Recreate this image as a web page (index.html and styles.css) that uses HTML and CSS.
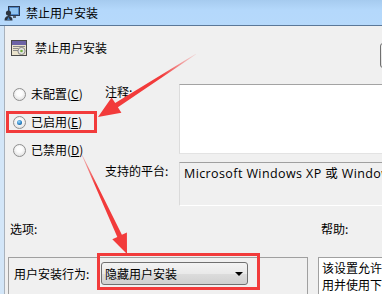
FILE: index.html
```html
<!DOCTYPE html>
<html lang="zh-CN">

<head>
    <meta charset="UTF-8">
    <title>禁止用户安装</title>
    <link rel="stylesheet" href="styles.css">
</head>

<body>
    <div class="window">
        <div class="titlebar">
            <svg class="icon" width="16" height="16" viewBox="0 0 16 16">
                <rect x="4.5" y="1.5" width="11" height="9" fill="#4f86c6" stroke="#2a3a52"/>
                <rect x="6" y="3" width="8" height="6" fill="#8fc3f0"/>
                <rect x="9" y="11" width="3" height="2" fill="#5a6470"/>
                <circle cx="4.5" cy="8" r="2.6" fill="#2c3440"/>
                <path d="M0.5 15.5 Q0.5 11 4.5 11 Q8.5 11 8.5 15.5 Z" fill="#2c3440"/>
                <path d="M3 15 L4.5 12 L6 15 Z" fill="#3e7fc4"/>
            </svg>
            <span>禁止用户安装</span>
        </div>

        <div class="client">
            <div class="head">
                <svg class="icon" width="16" height="16" viewBox="0 0 16 16">
                    <rect x="0.5" y="0.5" width="15" height="15" fill="#eae3cc" stroke="#4a4a4a"/>
                    <rect x="1" y="1" width="14" height="4" fill="#6c63a6"/>
                    <rect x="2" y="6" width="12" height="1" fill="#8a8a8a"/>
                    <rect x="2" y="8" width="5" height="1" fill="#8a8a8a"/>
                    <rect x="2" y="10" width="5" height="1" fill="#8a8a8a"/>
                    <circle cx="10.5" cy="11" r="3.6" fill="#e4e4e4" stroke="#6f6f6f" stroke-width="0.8"/>
                    <circle cx="10.5" cy="11" r="1.3" fill="#6fae3c"/>
                </svg>
                <span class="head-title">禁止用户安装</span>
                <div class="nav-btn"></div>
            </div>

            <div class="settings">
                <div class="radios">
                    <label class="radio-row"><span class="radio"></span><span>未配置(<u>C</u>)</span></label>
                    <label class="radio-row"><span class="radio checked"></span><span>已启用(<u>E</u>)</span></label>
                    <label class="radio-row"><span class="radio"></span><span>已禁用(<u>D</u>)</span></label>
                </div>
                <div class="field-label">注释:</div>
                <div class="comment-box"></div>
                <div class="field-label platform-label">支持的平台:</div>
                <div class="platform-box">Microsoft Windows XP 或 Windows 2000</div>
            </div>

            <div class="section-labels">
                <div class="options-label">选项:</div>
                <div class="help-label">帮助:</div>
            </div>

            <div class="panes">
                <div class="options-pane">
                    <div class="option-row">
                        <span class="option-label">用户安装行为:</span>
                        <div class="dropdown">
                            <span>隐藏用户安装</span>
                            <span class="caret"></span>
                        </div>
                    </div>
                </div>
                <div class="help-pane">该设置允许您配置用户安装<br>用并使用下列</div>
            </div>
        </div>

        <svg class="marks" width="382" height="294" viewBox="0 0 382 294">
            <defs>
                <linearGradient id="fade1" x1="196" y1="54" x2="98" y2="117" gradientUnits="userSpaceOnUse">
                    <stop offset="0" stop-color="#f23b3b" stop-opacity="0.1"/>
                    <stop offset="0.35" stop-color="#f23b3b" stop-opacity="1"/>
                </linearGradient>
                <linearGradient id="fade2" x1="82" y1="155" x2="127" y2="254" gradientUnits="userSpaceOnUse">
                    <stop offset="0" stop-color="#f23b3b" stop-opacity="0.3"/>
                    <stop offset="0.3" stop-color="#f23b3b" stop-opacity="1"/>
                </linearGradient>
            </defs>
            <rect x="7.5" y="112.5" width="88" height="19" fill="none" stroke="#f23b3b" stroke-width="3"/>
            <rect x="98.5" y="254.5" width="160" height="34" fill="none" stroke="#f23b3b" stroke-width="3"/>
            <polygon points="196.2,54.3 195.8,53.7 115.2,103 111.6,97.5 98,117 121.4,112.7 117.9,107.2" fill="url(#fade1)"/>
            <polygon points="82.3,154.9 81.7,155.1 117.3,237 112.3,239.3 127,254 126.9,232.5 121.9,234.8" fill="url(#fade2)"/>
        </svg>
    </div>
</body>

</html>
```

FILE: styles.css
```css
body {
    margin: 0;
    width: 382px;
    height: 294px;
    overflow: hidden;
    font-family: "Noto Sans CJK SC", "Noto Sans", sans-serif;
    font-size: 12px;
    line-height: 16px;
    color: #000;
}

.window {
    position: relative;
    width: 382px;
    height: 294px;
    background-color: #d3e6f8;
    overflow: hidden;
}

.titlebar {
    height: 25px;
    display: flex;
    align-items: center;
    gap: 6px;
    padding-left: 4px;
    background: linear-gradient(#a6cbef, #b4d8fb 40%, #b6d9fb);
    border-bottom: 1px solid #5b7898;
}

.titlebar span {
    margin-top: 1px;
}

.icon {
    display: block;
    flex-shrink: 0;
}

.client {
    margin-left: 4px;
    height: 268px;
    background-color: #f0f0f0;
    border-left: 1px solid #a9b2bc;
    overflow: hidden;
}

.head {
    display: flex;
    align-items: center;
    height: 16px;
    padding: 14px 0 0 6px;
}

.head-title {
    margin-left: 8px;
    margin-top: -1px;
}

.nav-btn {
    margin-left: auto;
    margin-right: -82px;
    margin-top: 14px;
    width: 82px;
    height: 23px;
    border: 1px solid #707070;
    border-radius: 3px;
    background: linear-gradient(#f2f2f2, #dddddd);
}

.settings {
    display: grid;
    grid-template-columns: 100px 74px 1fr;
    grid-template-rows: 70px 44px;
    row-gap: 8px;
    margin-top: 28px;
}

.radios {
    grid-row: 1 / span 2;
    display: flex;
    flex-direction: column;
    gap: 12px;
    padding: 2px 0 0 8px;
}

.radio-row {
    display: flex;
    align-items: center;
    height: 16px;
    gap: 5px;
}

.radio-row u {
    text-decoration: underline;
    text-underline-offset: 1px;
}

.radio {
    width: 11px;
    height: 11px;
    border: 1px solid #8f8f8f;
    border-radius: 50%;
    background: radial-gradient(circle at 50% 40%, #fdfdfd 30%, #d6d6d6 100%);
    display: flex;
    align-items: center;
    justify-content: center;
}

.radio.checked::after {
    content: "";
    width: 5px;
    height: 5px;
    border-radius: 50%;
    background: radial-gradient(circle at 40% 35%, #9fdcff 0%, #2a84c6 55%, #0d3a66 100%);
}

.platform-label {
    margin-top: 1px;
}

.comment-box {
    background-color: #fff;
    border-top: 1px solid #a3a3a3;
    border-left: 1px solid #dcdcdc;
    border-bottom: 1px solid #e3e3e3;
}

.platform-box {
    background-color: #f0f0f0;
    border-top: 1px solid #a0a0a0;
    border-left: 1px solid #dadada;
    border-bottom: 1px solid #ffffff;
    padding: 3px 0 0 4px;
    font-family: "Open Sans", "Noto Sans CJK SC", sans-serif;
    font-size: 12.5px;
    letter-spacing: 0.4px;
    white-space: nowrap;
    overflow: hidden;
}

.section-labels {
    display: grid;
    grid-template-columns: 310px 1fr;
    margin-top: 15px;
    padding-left: 5px;
}

.help-label {
    padding-left: 1px;
}

.panes {
    display: grid;
    grid-template-columns: 300px 1fr;
    gap: 10px;
    margin: 20px 0 0 3px;
}

.options-pane {
    height: 40px;
    border: 1px solid #a0a0a0;
    border-bottom: none;
    padding: 4px 0 0 5px;
}

.option-row {
    display: flex;
    align-items: center;
}

.option-label {
    width: 87px;
    flex-shrink: 0;
}

.dropdown {
    width: 138px;
    height: 21px;
    border: 1px solid #707070;
    border-radius: 3px;
    background: linear-gradient(#f3f3f3, #e9e9e9 50%, #dcdcdc 51%, #d0d0d0);
    display: flex;
    align-items: center;
    justify-content: space-between;
    padding: 0 4px 0 3px;
}

.caret {
    width: 0;
    height: 0;
    border-left: 4px solid transparent;
    border-right: 4px solid transparent;
    border-top: 4px solid #000;
}

.help-pane {
    height: 40px;
    background-color: #fff;
    border: 1px solid #a0a0a0;
    border-right: none;
    border-bottom: none;
    padding: 1px 0 0 3px;
    line-height: 17px;
    white-space: nowrap;
    overflow: hidden;
}

.marks {
    position: absolute;
    left: 0;
    top: 0;
    pointer-events: none;
}
```
